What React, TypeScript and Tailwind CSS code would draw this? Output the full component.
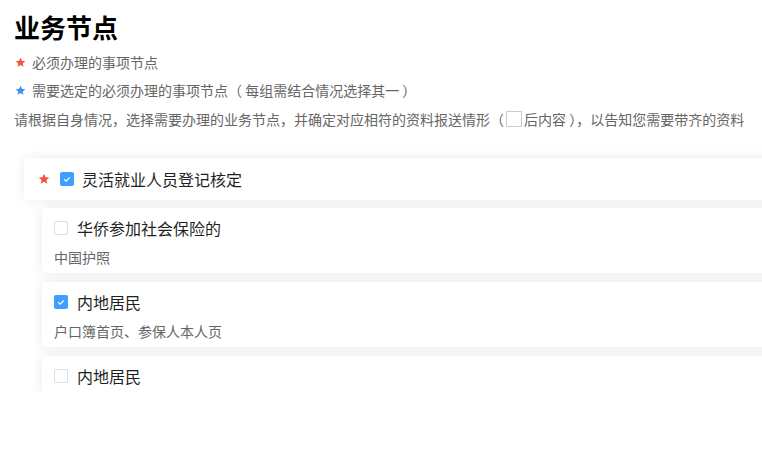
import React from 'react';

type SubItem = {
  title: string;
  desc?: string;
  checked: boolean;
};

const subItems: SubItem[] = [
  { title: '华侨参加社会保险的', desc: '中国护照', checked: false },
  { title: '内地居民', desc: '户口簿首页、参保人本人页', checked: true },
  { title: '内地居民', checked: false },
];

const Star: React.FC<{ color: string; size?: number }> = ({ color, size = 11 }) => (
  <svg width={size} height={size} viewBox="0 0 24 24" className="shrink-0">
    <path
      d="M12 1.5l3.1 6.9 7.4.7-5.6 5 1.7 7.4L12 17.6l-6.6 3.9 1.7-7.4-5.6-5 7.4-.7z"
      fill={color}
    />
  </svg>
);

const Checkbox: React.FC<{ checked: boolean }> = ({ checked }) =>
  checked ? (
    <span className="flex h-[14px] w-[14px] shrink-0 items-center justify-center rounded-[2px] bg-[#409eff]">
      <svg width="10" height="10" viewBox="0 0 10 10">
        <path d="M2.2 5.2l2 1.9 3.6-3.8" fill="none" stroke="#fff" strokeWidth="1.2" />
      </svg>
    </span>
  ) : (
    <span className="h-[14px] w-[14px] shrink-0 rounded-[2px] border border-[#dcdfe6] bg-white" />
  );

export default function App() {
  return (
    <div
      className="h-[463px] w-[762px] overflow-hidden bg-white"
      style={{ fontFamily: '"Noto Sans CJK SC", "Noto Sans", sans-serif' }}
    >
      {/* Header */}
      <div className="px-[14px] pt-3">
        <h1 className="text-[26px] font-bold leading-[30px] text-black">业务节点</h1>
        <div className="mt-[6px] flex items-center gap-[6px] pl-[1px] text-[14px] leading-[28px] text-[#666]">
          <Star color="#f5533d" />
          <span>必须办理的事项节点</span>
        </div>
        <div className="flex items-center gap-[6px] pl-[1px] text-[14px] leading-[28px] text-[#666]">
          <Star color="#3d8ef5" />
          <span>需要选定的必须办理的事项节点（ 每组需结合情况选择其一 ）</span>
        </div>
        <div className="mt-px flex items-center whitespace-nowrap text-[14px] leading-[28px] text-[#666]">
          <span>请根据自身情况，选择需要办理的业务节点，并确定对应相符的资料报送情形（</span>
          <span className="mx-[2px] inline-block h-[16px] w-[16px] border border-[#ccc] bg-white" />
          <span>后内容 ），以告知您需要带齐的资料</span>
        </div>
      </div>

      {/* Node list */}
      <div className="mt-[7px] h-[253px] overflow-hidden">
        <div className="w-[820px] pl-[24px] pt-[18px]">
          <div className="flex h-[42px] items-center rounded-[4px] bg-white pl-[14px] shadow-[0_0_12px_rgba(0,0,0,0.08)]">
            <Star color="#f5533d" size={12} />
            <span className="ml-[10px]">
              <Checkbox checked />
            </span>
            <span className="ml-[8px] text-[16px] text-[#1f1f1f]">灵活就业人员登记核定</span>
          </div>

          <div className="mt-[8px] flex flex-col gap-[9px] pl-[18px]">
            {subItems.map((item, i) => (
              <div
                key={i}
                className="rounded-[4px] bg-white px-[12px] pb-[6px] pt-[8px] shadow-[0_0_12px_rgba(0,0,0,0.09)]"
              >
                <div className="flex h-[24px] items-center gap-[9px]">
                  <Checkbox checked={item.checked} />
                  <span className="text-[16px] text-[#1f1f1f]">{item.title}</span>
                </div>
                {item.desc && (
                  <div className="mt-[7px] text-[14px] leading-[20px] text-[#666]">{item.desc}</div>
                )}
              </div>
            ))}
          </div>
        </div>
      </div>
    </div>
  );
}
